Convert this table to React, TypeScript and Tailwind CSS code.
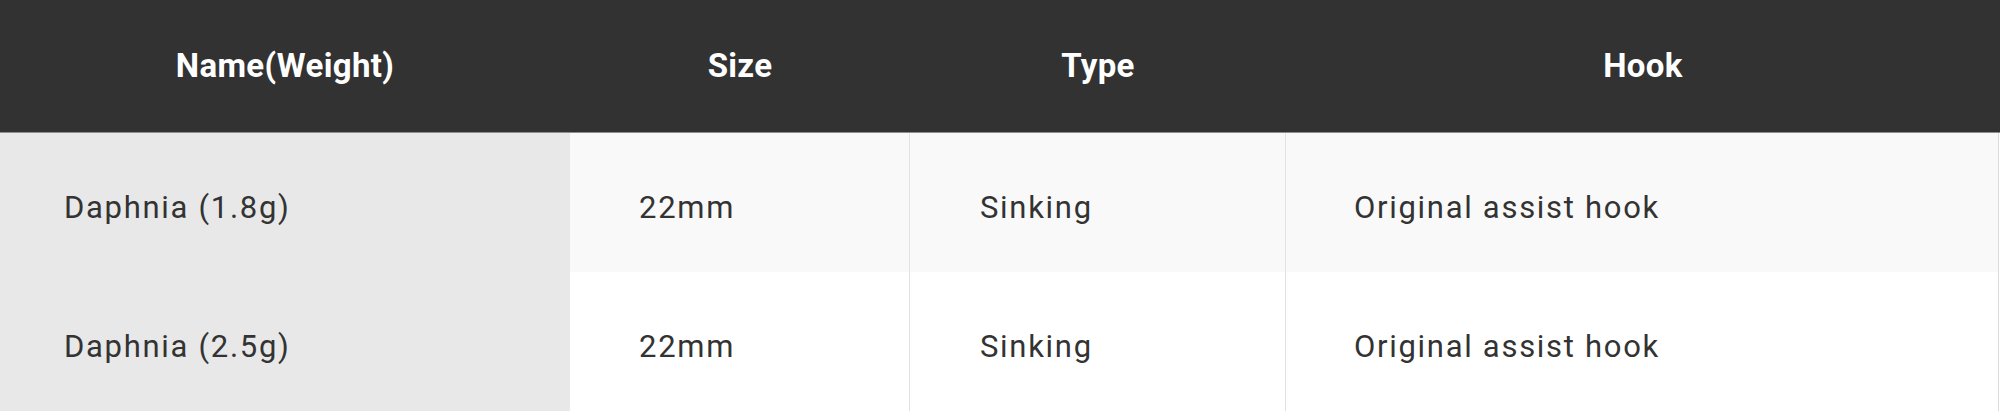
const columns = ['Name(Weight)', 'Size', 'Type', 'Hook'];

const rows = [
  { name: 'Daphnia (1.8g)', size: '22mm', type: 'Sinking', hook: 'Original assist hook' },
  { name: 'Daphnia (2.5g)', size: '22mm', type: 'Sinking', hook: 'Original assist hook' },
];

export default function App() {
  return (
    <div className="w-[2000px] h-[417px] bg-white font-['Roboto',sans-serif]">
      <div className="grid grid-cols-[570px_340px_376px_1fr] w-full">
        {columns.map((c) => (
          <div
            key={c}
            className="h-[133px] flex items-center justify-center bg-[#323232] border-b border-[#8e8e8e] text-white font-bold text-[33px] tracking-[0.01em]"
          >
            {c}
          </div>
        ))}
        {rows.map((r, i) => {
          const bg = i === 0 ? 'bg-[#f9f9f9]' : 'bg-white';
          const cell = 'h-[139px] pt-[11px] flex items-center text-[31px] text-[#333] tracking-[0.055em]';
          return [
            <div key={`n${i}`} className={`${cell} bg-[#e8e8e8] pl-[64px]`}>{r.name}</div>,
            <div key={`s${i}`} className={`${cell} ${bg} pl-[69px] border-r border-[#e2e2e2]`}>{r.size}</div>,
            <div key={`t${i}`} className={`${cell} ${bg} pl-[70px] border-r border-[#e2e2e2]`}>{r.type}</div>,
            <div key={`h${i}`} className={`${cell} ${bg} pl-[68px] border-r border-[#dcdcdc] mr-[1px]`}>{r.hook}</div>,
          ];
        })}
      </div>
    </div>
  );
}
